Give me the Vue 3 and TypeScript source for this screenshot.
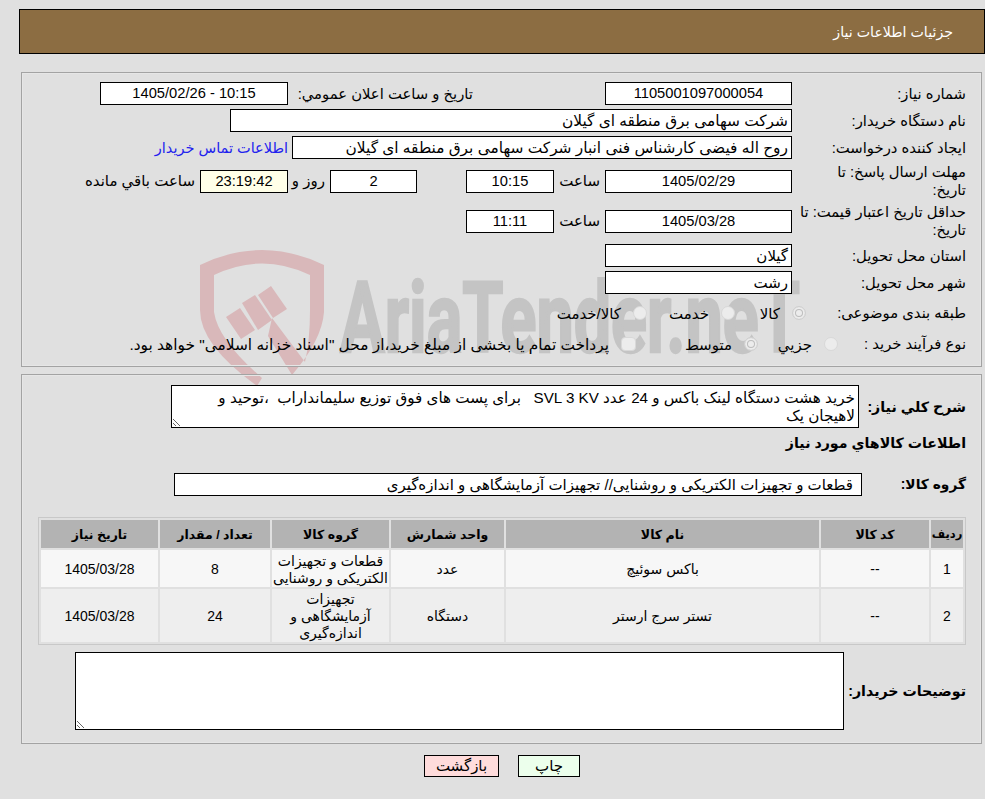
<script setup lang="ts">
interface Item {
  id: number
  code: string
  name: string
  unit: string
  group: string[]
  qty: number
  date: string
}
const items: Item[] = [
  { id: 1, code: '--', name: 'باکس سوئیچ', unit: 'عدد', group: ['قطعات و تجهیزات', 'الکتریکی و روشنایی'], qty: 8, date: '1405/03/28' },
  { id: 2, code: '--', name: 'تستر سرج ارستر', unit: 'دستگاه', group: ['تجهیزات', 'آزمایشگاهی و', 'اندازه‌گیری'], qty: 24, date: '1405/03/28' },
]
const desc = 'خرید هشت دستگاه لینک باکس و 24 عدد SVL 3 KV   برای پست های فوق توزیع سلیمانداراب  ،توحید و\nلاهیجان یک'
</script>

<template>
  <div class="page">
    <svg class="mark" width="985" height="799" viewBox="0 0 985 799" aria-hidden="true">
      <g fill="#d9b8ba">
        <path d="M200 265 Q262 235 324 265 L324 312 Q322 340 292 375 L268 336 L272 318 L305 362 Q310 340 310 310 L310 275 Q262 252 214 275 L214 312 Q218 340 262 378 L257 386 Q200 345 200 310 Z" />
        <path d="M226 317 L240 308 L255 330 L241 339 Z" />
        <path d="M242 303 L255 295 L272 320 L258 330 Z" />
        <path d="M258 295 L271 286 L287 309 L273 318 Z" />
      </g>
      <text x="340" y="352" class="mark-text" textLength="460" lengthAdjust="spacingAndGlyphs">AriaTender.neT</text>
    </svg>

    <header class="title"><span>جزئیات اطلاعات نیاز</span></header>

    <section class="panel panel-top">
      <div class="row">
        <div class="lab">شماره نياز:</div>
        <div class="field w187 center">1105001097000054</div>
        <div class="lab announce">تاریخ و ساعت اعلان عمومي:</div>
        <div class="field w188 center">10:15 - 1405/02/26</div>
      </div>
      <div class="row">
        <div class="lab">نام دستگاه خريدار:</div>
        <div class="field w562 roomy">شرکت سهامی برق منطقه ای گیلان</div>
      </div>
      <div class="row">
        <div class="lab">ایجاد کننده درخواست:</div>
        <div class="field w500 roomy">روح اله فیضی کارشناس فنی انبار شرکت سهامی برق منطقه ای گیلان</div>
        <a class="contact" href="#">اطلاعات تماس خریدار</a>
      </div>
      <div class="row row-tall first-tall">
        <div class="lab lab-wrap">مهلت ارسال پاسخ: تا تاریخ:</div>
        <div class="field w187 center">1405/02/29</div>
        <div class="unit w51">ساعت</div>
        <div class="field w88 center">10:15</div>
        <div class="spacer"></div>
        <div class="field w87 center">2</div>
        <div class="unit w42">روز و</div>
        <div class="field w88 center pale">23:19:42</div>
        <div class="unit">ساعت باقي مانده</div>
      </div>
      <div class="row row-tall second-tall">
        <div class="lab">حداقل تاریخ اعتبار قیمت: تا تاریخ:</div>
        <div class="field w187 center">1405/03/28</div>
        <div class="unit w51">ساعت</div>
        <div class="field w88 center">11:11</div>
      </div>
      <div class="row">
        <div class="lab">استان محل تحویل:</div>
        <div class="field w187">گیلان</div>
      </div>
      <div class="row">
        <div class="lab">شهر محل تحویل:</div>
        <div class="field w187">رشت</div>
      </div>
      <div class="row radios-a">
        <div class="lab lab-a">طبقه بندی موضوعی:</div>
        <div class="opt w71"><span class="radio on"></span><span class="opt-text">کالا</span></div>
        <div class="opt w88b"><span class="radio"></span><span class="opt-text">خدمت</span></div>
        <div class="opt"><span class="radio"></span><span class="opt-text">کالا/خدمت</span></div>
      </div>
      <div class="row radios-b">
        <div class="lab lab-b">نوع فرآیند خرید :</div>
        <div class="opt w80"><span class="radio"></span><span class="opt-text">جزيي</span></div>
        <div class="opt w122"><span class="radio on"></span><span class="opt-text">متوسط</span></div>
        <div class="opt"><span class="radio square"></span><span class="opt-text long">پرداخت تمام یا بخشی از مبلغ خرید،از محل "اسناد خزانه اسلامی" خواهد بود.</span></div>
      </div>
    </section>

    <section class="panel panel-bottom">
      <div class="row desc-row">
        <div class="lab strong lab-desc">شرح كلي نياز:</div>
        <textarea class="area area-desc" readonly>{{ desc }}</textarea>
      </div>
      <h3 class="heading">اطلاعات كالاهاي مورد نياز</h3>
      <div class="row group-row">
        <div class="lab strong lab-group">گروه کالا:</div>
        <div class="field w688 group-field">قطعات و تجهیزات الکتریکی و روشنایی// تجهیزات آزمایشگاهی و اندازه‌گیری</div>
      </div>
      <table class="grid">
        <colgroup>
          <col class="c1" /><col class="c2" /><col class="c3" /><col class="c4" />
          <col class="c5" /><col class="c6" /><col class="c7" />
        </colgroup>
        <thead>
          <tr>
            <th class="th-narrow">ردیف</th><th>کد کالا</th><th>نام کالا</th><th>واحد شمارش</th>
            <th>گروه کالا</th><th>تعداد / مقدار</th><th>تاریخ نیاز</th>
          </tr>
        </thead>
        <tbody>
          <tr v-for="item in items" :key="item.id">
            <td>{{ item.id }}</td>
            <td>{{ item.code }}</td>
            <td>{{ item.name }}</td>
            <td>{{ item.unit }}</td>
            <td><div v-for="line in item.group" :key="line">{{ line }}</div></td>
            <td>{{ item.qty }}</td>
            <td>{{ item.date }}</td>
          </tr>
        </tbody>
      </table>
      <div class="row notes-row">
        <div class="lab strong lab-notes">توضیحات خریدار:</div>
        <textarea class="area area-notes" readonly></textarea>
      </div>
    </section>

    <div class="actions">
      <button class="btn print" type="button">چاپ</button>
      <button class="btn back" type="button">بازگشت</button>
    </div>
  </div>
</template>

<style>
html, body { margin: 0; background: #e0e0e0; }
</style>

<style scoped>
.page {
  position: relative;
  width: 985px;
  height: 799px;
  overflow: hidden;
  direction: rtl;
  background: #e0e0e0;
  color: #000;
  font-family: "Liberation Sans", "DejaVu Sans", sans-serif;
  font-size: 15px;
  box-sizing: border-box;
  padding-top: 9px;
}
.mark { position: absolute; left: 0; top: 0; pointer-events: none; }
.mark-text {
  direction: ltr;
  font-family: Roboto, sans-serif;
  font-weight: 700;
  font-size: 98px;
  fill: #c4c4c4;
  stroke: #c4c4c4;
  stroke-width: 2.5px;
}
.title {
  position: relative;
  box-sizing: border-box;
  width: 966px;
  height: 45px;
  margin-left: 19px;
  padding: 13px 31px 0 0;
  background: #8c6d42;
  border: 1px solid #000;
  color: #fff;
  font-size: 14.2px;
  line-height: 18px;
}
.panel {
  position: relative;
  box-sizing: border-box;
  width: 961px;
  margin-left: 21px;
  margin-right: 3px;
  border: 1px solid #a3a3a3;
  box-shadow: inset 0 0 0 1px #e6e6e6;
  padding-right: 15px;
}
.panel-top { margin-top: 18px; height: 295px; padding-top: 9px; }
.panel-bottom { margin-top: 7px; height: 370px; padding-top: 10px; }
.row { display: flex; align-items: center; min-height: 23px; margin-bottom: 4px; }
.row-tall { height: 36px; margin-bottom: 4px; }
.first-tall { margin-top: 4px; }
.second-tall { margin-bottom: 5px; }
.lab { box-sizing: border-box; width: 174px; flex: none; padding-left: 0; font-size: 14.8px; line-height: 18px; }
.lab-wrap { padding-left: 14px; }
.announce { width: 185px; margin-right: 132px; white-space: nowrap; }
.field {
  box-sizing: border-box;
  flex: none;
  height: 23px;
  line-height: 21px;
  padding: 0 3px;
  background: #fff;
  border: 1px solid #000;
  white-space: nowrap;
  overflow: hidden;
}
.roomy { font-size: 15.4px; }
.center { text-align: center; font-size: 14.7px; }
.pale { background: #ffffe8; }
.w187 { width: 187px; }
.w188 { width: 188px; }
.w562 { width: 562px; }
.w500 { width: 500px; }
.w88 { width: 88px; }
.w87 { width: 87px; }
.w688 { width: 688px; }
.unit { flex: none; padding-right: 5px; box-sizing: border-box; white-space: nowrap; }
.w51 { width: 51px; }
.w42 { width: 42px; }
.spacer { width: 49px; flex: none; }
.contact { color: #2222ee; text-decoration: none; margin-right: 4px; font-size: 14.5px; }
.radios-a { margin-top: 7px; margin-bottom: 8px; }
.lab-a { width: 160px; white-space: nowrap; }
.lab-b { width: 128px; white-space: nowrap; }
.opt { display: flex; align-items: center; gap: 12px; flex: none; white-space: nowrap; }
.opt-text { margin-top: 3px; }
.long { font-size: 15.4px; }
.w71 { width: 71px; }
.w88b { width: 88px; }
.w80 { width: 80px; }
.w122 { width: 122px; }
.radio {
  box-sizing: border-box;
  width: 14px;
  height: 14px;
  border-radius: 50%;
  background: #ececec;
  border: 1px solid #d8d8d8;
  flex: none;
}
.radio.on { background: #ececec; border: 1px solid #cfcfcf; box-shadow: inset 0 0 0 2px #ececec, inset 0 0 0 3px #bdbdbd; }
.radio.square { border-radius: 4px; width: 15px; }
.desc-row { align-items: center; margin-bottom: 6px; }
.lab-desc { width: 107px; white-space: nowrap; font-size: 14.2px; }
.strong { font-weight: 700; font-size: 14.2px; }
.area {
  box-sizing: border-box;
  flex: none;
  display: block;
  background: #fff;
  border: 1px solid #000;
  border-radius: 0;
  padding: 3px 3px 1px;
  margin: 0;
  font-family: inherit;
  font-size: 15.2px;
  line-height: 18px;
  color: #000;
  outline: none;
  overflow: hidden;
  direction: rtl;
}
.area-desc { width: 688px; height: 43px; resize: both; }
.heading { margin: 0; font-size: 14.2px; font-weight: 700; line-height: 18px; height: 18px; }
.group-row { margin-top: 21px; margin-bottom: 21px; }
.lab-group { width: 104px; white-space: nowrap; font-size: 13.8px; }
.group-field { padding-right: 8px; }
.grid {
  box-sizing: border-box;
  width: 927px;
  table-layout: fixed;
  border-collapse: separate;
  border-spacing: 2px;
  border: 1px solid #c8c8c8;
  font-size: 14px;
}
.c1 { width: 32px; }
.c2 { width: 108px; }
.c3 { width: 313px; }
.c4 { width: 113px; }
.c5 { width: 117px; }
.c6 { width: 110px; }
.c7 { width: 117px; }
.grid th {
  height: 28px;
  padding: 0;
  background: #b3b3b3;
  font-size: 12.5px;
  font-weight: 700;
  text-align: center;
  white-space: nowrap;
}
.grid .th-narrow { font-size: 11.5px; }
.grid td {
  box-sizing: border-box;
  padding: 2px 0 0;
  text-align: center;
  line-height: 17px;
  height: 37px;
}
.grid tbody tr:nth-child(1) td { background: #f7f7f7; }
.grid tbody tr:nth-child(2) td { background: #eeeeee; height: 53px; }
.notes-row { margin-top: 7px; }
.lab-notes { width: 122px; white-space: nowrap; }
.area-notes { width: 769px; height: 78px; resize: both; }
.actions {
  position: relative;
  display: flex;
  justify-content: flex-start;
  gap: 19px;
  margin-top: 11px;
  margin-right: 405px;
}
.btn {
  box-sizing: border-box;
  height: 22px;
  padding: 0;
  border: 1px solid #000;
  font-family: inherit;
  font-size: 15px;
  color: #000;
  line-height: 18px;
}
.back { width: 75px; background: #ffdcdc; }
.print { width: 62px; background: #ecffec; }
</style>
